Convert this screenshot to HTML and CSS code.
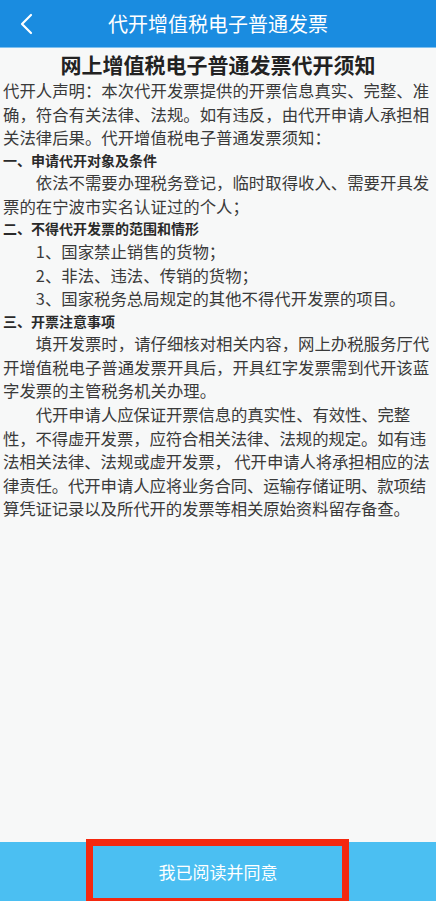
FILE: index.html
```html
<!DOCTYPE html>
<html lang="zh-CN">
<head>
<meta charset="utf-8">
<title>代开增值税电子普通发票</title>
<link rel="stylesheet" href="styles.css">
</head>
<body>
<div class="page">
  <header class="topbar">
    <svg class="back" width="14" height="22" viewBox="0 0 14 22"><path d="M12 2 L3 11 L12 20" fill="none" stroke="#fff" stroke-width="2.2" stroke-linecap="round" stroke-linejoin="round"/></svg>
    <div class="topbar-title">代开增值税电子普通发票</div>
  </header>
  <main class="content">
    <h1 class="doc-title">网上增值税电子普通发票代开须知</h1>
    <p class="para">代开人声明：本次代开发票提供的开票信息真实、完整、准确，符合有关法律、法规。如有违反，由代开申请人承担相关法律后果。代开增值税电子普通发票须知：</p>
    <h2 class="sec">一、申请代开对象及条件</h2>
    <p class="para indent">依法不需要办理税务登记，临时取得收入、需要开具发票的在宁波市实名认证过的个人；</p>
    <h2 class="sec">二、不得代开发票的范围和情形</h2>
    <p class="para indent">1、国家禁止销售的货物；</p>
    <p class="para indent">2、非法、违法、传销的货物；</p>
    <p class="para indent">3、国家税务总局规定的其他不得代开发票的项目。</p>
    <h2 class="sec">三、开票注意事项</h2>
    <p class="para indent">填开发票时，请仔细核对相关内容，网上办税服务厅代开增值税电子普通发票开具后，开具红字发票需到代开该蓝字发票的主管税务机关办理。</p>
    <p class="para indent tight">代开申请人应保证开票信息的真实性、有效性、完整性，不得虚开发票，应符合相关法律、法规的规定。如有违法相关法律、法规或虚开发票， 代开申请人将承担相应的法律责任。代开申请人应将业务合同、运输存储证明、款项结算凭证记录以及所代开的发票等相关原始资料留存备查。</p>
  </main>
  <footer class="bottombar">
    <button class="agree">我已阅读并同意</button>
    <div class="highlight"></div>
  </footer>
</div>
</body>
</html>
```

FILE: styles.css
```css
* { box-sizing: border-box; }
html, body { margin: 0; padding: 0; }
body {
  font-family: "Noto Sans CJK SC", "Noto Sans", sans-serif;
  background: #f7f8f8;
  width: 436px;
  height: 901px;
  overflow: hidden;
}
.page {
  display: flex;
  flex-direction: column;
  height: 901px;
}
.topbar {
  height: 48px;
  background: #1a8ce0;
  display: flex;
  align-items: center;
  justify-content: center;
  position: relative;
  border-bottom: 1px solid #7ec0ef;
}
.back {
  position: absolute;
  left: 19px;
  top: 13px;
}
.topbar-title {
  color: #fff;
  font-size: 20px;
  line-height: 26px;
  margin-top: 1px;
}
.content {
  flex: 1;
  padding: 1px 3px 0 3px;
  color: #333;
}
.doc-title {
  margin: 0;
  text-align: center;
  font-size: 21px;
  line-height: 30px;
  font-weight: 700;
  color: #222;
}
.para {
  margin: 0;
  font-size: 16.4px;
  line-height: 23.6px;
  color: #3a3a3a;
}
.indent { text-indent: 2em; }
.tight { letter-spacing: -0.12px; }
.sec {
  margin: 0;
  font-size: 14px;
  line-height: 21.5px;
  font-weight: 700;
  color: #2a2a2a;
}
.bottombar {
  height: 59px;
  background: #4bbff2;
  position: relative;
  display: flex;
  align-items: center;
  justify-content: center;
}
.agree {
  border: none;
  background: transparent;
  color: #fff;
  font-family: "Noto Sans CJK SC", sans-serif;
  font-size: 17px;
  padding: 0;
}
.highlight {
  position: absolute;
  left: 86px;
  top: -3px;
  width: 263px;
  height: 66px;
  border: 7px solid #f4280f;
}
```
